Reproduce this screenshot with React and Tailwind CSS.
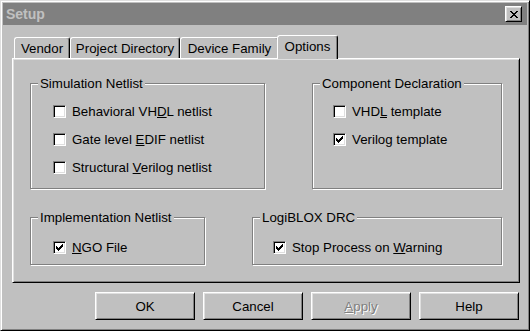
const raised =
  'border border-t-white border-l-white border-r-black border-b-black shadow-[inset_1px_1px_0_#dfdfdf,inset_-1px_-1px_0_#808080]';

const TABS = [
  { label: 'Vendor', w: 'w-[56px]' },
  { label: 'Project Directory', w: 'w-[110px]' },
  { label: 'Device Family', w: 'w-[99px]' },
];

export default function App() {
  return (
    <div
      className={`w-[530px] h-[331px] bg-[#c0c0c0] p-[2px] flex flex-col text-[13.3px] leading-[15px] text-black font-['Liberation_Sans',Arial,sans-serif] border border-t-[#dfdfdf] border-l-[#dfdfdf] border-r-black border-b-black shadow-[inset_1px_1px_0_#fff,inset_-1px_-1px_0_#808080]`}
    >
      {/* Title bar */}
      <div className="h-[22px] bg-[#808080] flex items-center justify-between pl-[3px] pr-[5px]">
        <span className="font-bold text-[14px] text-[#c0c0c0]">Setup</span>
        <button className={`w-[17px] h-[16px] bg-[#c0c0c0] flex items-center justify-center ${raised}`}>
          <CloseGlyph />
        </button>
      </div>

      <div className="pl-[9px] flex flex-col">
        {/* Tab strip */}
        <div className="relative z-10 mt-[10px] h-[24px] -mb-[1px] flex items-end pl-[2px]">
          {TABS.map((t) => (
            <div
              key={t.label}
              className={`${t.w} h-[21px] mb-[1px] flex items-center justify-center rounded-t-[3px] bg-[#c0c0c0] border-t border-l border-r border-t-white border-l-white border-r-black shadow-[inset_-1px_0_0_#808080]`}
            >
              {t.label}
            </div>
          ))}
          <div className="relative -ml-[2px] w-[61px] h-[24px] pb-[3px] flex items-center justify-center rounded-t-[3px] bg-[#c0c0c0] border-t border-l border-r border-t-white border-l-white border-r-black shadow-[inset_-1px_0_0_#808080]">
            Options
          </div>
        </div>

        {/* Tab panel */}
        <div className="w-[508px] h-[225px] border border-t-white border-l-white border-r-black border-b-black shadow-[inset_1px_1px_0_#dfdfdf,inset_-1px_-1px_0_#808080] pl-[17px] pt-[24px] flex flex-col">
          <div className="flex gap-[47px]">
            <Group label="Simulation Netlist" className="w-[235px] h-[106px] pl-[22px] pt-[21px]">
              <Check label={<>Behavioral VH<u>D</u>L netlist</>} />
              <Check label={<>Gate level <u>E</u>DIF netlist</>} />
              <Check label={<>Structural <u>V</u>erilog netlist</>} />
            </Group>
            <Group label="Component Declaration" className="w-[190px] h-[106px] pl-[20px] pt-[21px]">
              <Check label={<>VHD<u>L</u> template</>} />
              <Check checked label={<>Verilo<u>g</u> template</>} />
            </Group>
          </div>
          <div className="flex gap-[47px] mt-[28px]">
            <Group label="Implementation Netlist" className="w-[175px] h-[48px] pl-[22px] pt-[23px]">
              <Check checked label={<><u>N</u>GO File</>} />
            </Group>
            <Group label="LogiBLOX DRC" className="w-[250px] h-[48px] pl-[20px] pt-[23px]">
              <Check checked label={<>Stop Process on <u>W</u>arning</>} />
            </Group>
          </div>
        </div>

        {/* Buttons */}
        <div className="w-[508px] mt-[9px] pr-[1px] flex justify-end gap-[8px]">
          <Btn>OK</Btn>
          <Btn>Cancel</Btn>
          <Btn disabled>
            <u>A</u>pply
          </Btn>
          <Btn>Help</Btn>
        </div>
      </div>
    </div>
  );
}

function Group({ label, className, children }) {
  return (
    <div
      className={`relative border border-[#808080] shadow-[inset_1px_1px_0_#fff,1px_1px_0_#fff] flex flex-col gap-[15px] ${className}`}
    >
      <span className="absolute left-[7px] -top-[8px] px-[2px] bg-[#c0c0c0] whitespace-nowrap">{label}</span>
      {children}
    </div>
  );
}

function Check({ label, checked }) {
  return (
    <div className="flex items-center gap-[6px] h-[13px] whitespace-nowrap">
      <span className="w-[13px] h-[13px] shrink-0 bg-white flex items-center justify-center border border-t-[#808080] border-l-[#808080] border-r-white border-b-white shadow-[inset_1px_1px_0_#000,inset_-1px_-1px_0_#dfdfdf]">
        {checked && <CheckGlyph />}
      </span>
      <span>{label}</span>
    </div>
  );
}

function Btn({ children, disabled }) {
  return (
    <button
      className={`w-[100px] h-[28px] bg-[#c0c0c0] flex items-center justify-center ${raised} ${
        disabled ? 'text-[#808080] [text-shadow:1px_1px_0_#fff]' : 'text-black'
      }`}
    >
      <span>{children}</span>
    </button>
  );
}

function CheckGlyph() {
  const rows = [
    [6, 0, 1], [5, 1, 2], [0, 2, 1], [4, 2, 3], [0, 3, 2], [3, 3, 3], [0, 4, 5], [1, 5, 3], [2, 6, 1],
  ];
  return (
    <svg width="7" height="7" viewBox="0 0 7 7" shapeRendering="crispEdges">
      {rows.map(([x, y, w], i) => (
        <rect key={i} x={x} y={y} width={w} height="1" fill="#000" />
      ))}
    </svg>
  );
}

function CloseGlyph() {
  const rows = [
    [0, 0, 2], [6, 0, 2], [1, 1, 2], [5, 1, 2], [2, 2, 4], [3, 3, 2], [2, 4, 4], [1, 5, 2], [5, 5, 2], [0, 6, 2], [6, 6, 2],
  ];
  return (
    <svg width="8" height="7" viewBox="0 0 8 7" shapeRendering="crispEdges">
      {rows.map(([x, y, w], i) => (
        <rect key={i} x={x} y={y} width={w} height="1" fill="#000" />
      ))}
    </svg>
  );
}
